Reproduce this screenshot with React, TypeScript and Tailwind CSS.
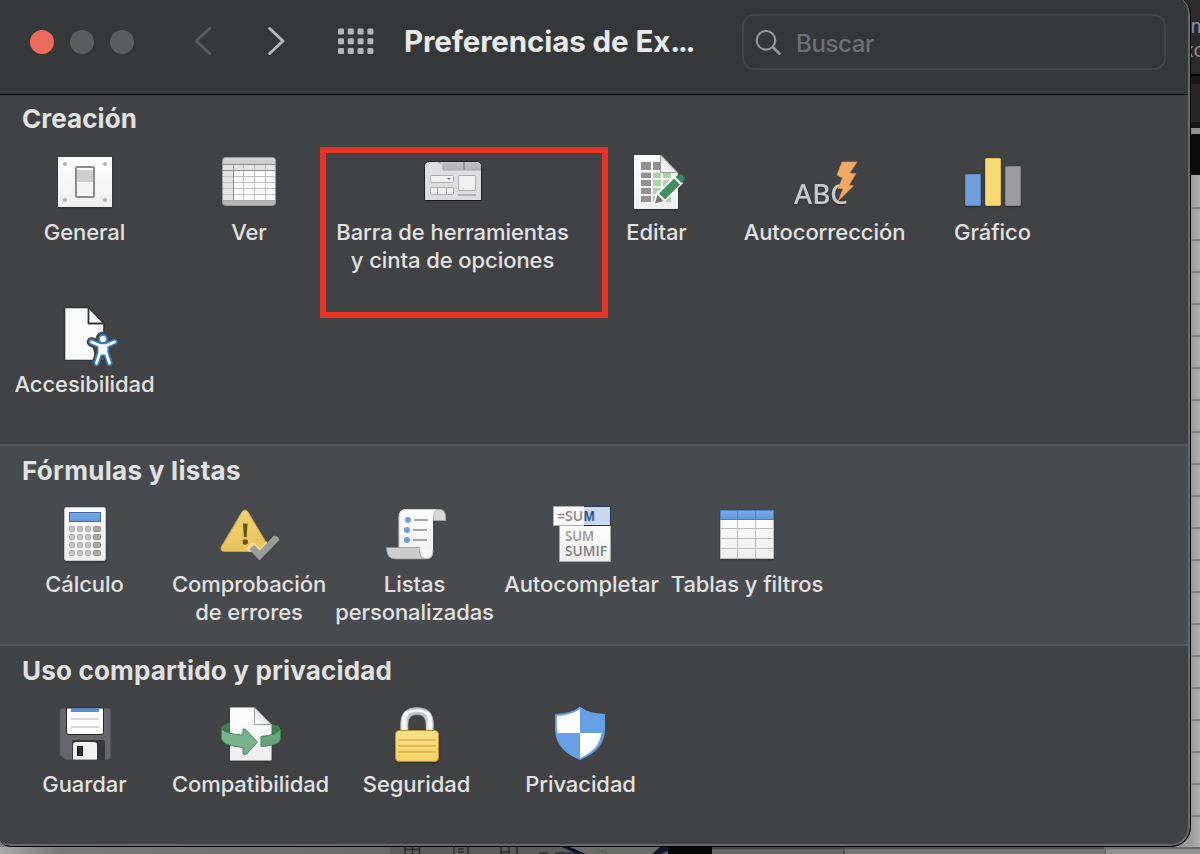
import type { ReactNode } from 'react';

type ItemProps = {
  label: ReactNode;
  width: string;
  viewBox: string;
  children: ReactNode;
};

function Item({ label, width, viewBox, children }: ItemProps) {
  return (
    <div className={`${width} flex shrink-0 flex-col items-center`}>
      <svg width={viewBox.split(' ')[2]} height="64" viewBox={viewBox} className="shrink-0">
        {children}
      </svg>
      <div className="mt-1 text-center text-[22px] leading-7 font-[450] tracking-[-0.07px] whitespace-nowrap text-[#e2e2e3]">{label}</div>
    </div>
  );
}

function Heading({ tracking, children }: { tracking: string; children: ReactNode }) {
  return <h2 className={`${tracking} pl-[22px] text-[26px] leading-8 font-bold text-[#e1e2e2]`}>{children}</h2>;
}

function Gradients() {
  return (
    <svg width="0" height="0" className="absolute">
      <defs>
        <linearGradient id="paper" x1="0" y1="0" x2="0" y2="1">
          <stop offset="0" stopColor="#fff" />
          <stop offset="1" stopColor="#eee" />
        </linearGradient>
        <linearGradient id="fold" x1="0" y1="1" x2="1" y2="0">
          <stop offset="0" stopColor="#fff" />
          <stop offset="1" stopColor="#cfcfcf" />
        </linearGradient>
        <linearGradient id="gray" x1="0" y1="0" x2="0" y2="1">
          <stop offset="0" stopColor="#d2d2d2" />
          <stop offset="1" stopColor="#b4b4b4" />
        </linearGradient>
        <linearGradient id="gold" x1="0" y1="0" x2="0" y2="1">
          <stop offset="0" stopColor="#fbe08a" />
          <stop offset="1" stopColor="#f5cf62" />
        </linearGradient>
        <linearGradient id="blue" x1="0" y1="0" x2="0" y2="1">
          <stop offset="0" stopColor="#79aae6" />
          <stop offset="1" stopColor="#6598d8" />
        </linearGradient>
        <linearGradient id="warn" x1="0" y1="0" x2="0" y2="1">
          <stop offset="0" stopColor="#edcf72" />
          <stop offset="1" stopColor="#e9c45c" />
        </linearGradient>
        <linearGradient id="metal" x1="0" y1="0" x2="1" y2="0">
          <stop offset="0" stopColor="#cfcfcf" />
          <stop offset="0.12" stopColor="#fff" />
          <stop offset="0.25" stopColor="#c4c4c8" />
          <stop offset="0.75" stopColor="#c4c4c8" />
          <stop offset="0.88" stopColor="#fff" />
          <stop offset="1" stopColor="#cfcfcf" />
        </linearGradient>
        <filter id="drop" x="-20%" y="-20%" width="140%" height="150%">
          <feDropShadow dx="0" dy="1" stdDeviation="1" floodColor="#000" floodOpacity="0.35" />
        </filter>
      </defs>
    </svg>
  );
}

function Backdrop() {
  const lines = Array.from({ length: 21 }, (_, i) => i);
  return (
    <div className="absolute inset-0 flex flex-col bg-[#7b7b7b]">
      <div className="flex h-[847px] justify-end">
        <div className="flex w-[40px] flex-col">
          <div className="flex h-[74px] flex-col items-end overflow-hidden bg-[#2b2b2b] pt-[14px] text-[20px] leading-6 text-[#8d8d8d]">
            <span className="-mr-[8px]">m</span>
            <span className="-mr-[5px]">xc</span>
          </div>
          <div className="h-[2px] bg-black" />
          <div className="h-[8px] bg-[#1b1b1b]" />
          <div className="h-[38px] bg-[#272727]" />
          <div className="h-[6px] bg-[#151515]" />
          <div className="h-[6px] bg-[#8e8e8e]" />
          <div className="h-[42px] bg-[#0d0d0d]" />
          <div className="flex grow flex-col overflow-hidden bg-linear-to-r from-[#9c9c9c] from-78% to-[#b0b0b0] pt-[2px]">
            {lines.map((i) => (
              <div key={i} className="h-8 shrink-0 border-b-2 border-[#818181]" />
            ))}
          </div>
        </div>
      </div>
      <div className="flex h-[7px]">
        <div className="w-[390px] bg-linear-to-r from-[#aaa] via-[#7a7a7a] via-15% to-[#696969]" />
        <svg width="322" height="7" viewBox="390 847 322 7" className="shrink-0">
          <rect x="390" y="847" width="278" height="7" fill="#5c5c5c" />
          <path d="M405 847v7M412.500 847v7M419.500 847v7M404 849.500h16M454 847v7M468 847v7M458 849h6M458 852h6M501 847v7M509 847v7M517 847v7M501 852h9" stroke="#2c2c2c" strokeWidth="1.500" fill="none" />
          <path d="M539 853h9M555 853h20" stroke="#3a3a3a" strokeWidth="2" />
          <path d="M568 847h98l-14 7h-67z" fill="#696b68" />
          <path d="M562 847h8l16 7h-9zM660 847h8v4l-8 3h-8z" fill="#10162f" />
          <path d="M598 854l4-4 4 4M606 854v-4" stroke="#55584e" fill="none" />
          <rect x="668" y="847" width="44" height="7" fill="#080808" />
        </svg>
        <div className="w-[131px] border-t-2 border-[#454545] bg-[#686868]" />
        <div className="w-[261px] border-t-2 border-l-2 border-[#4c4c4c] bg-[#747474]" />
        <div className="grow border-t-2 border-l-2 border-[#6a6a6a] bg-[#909090]" />
      </div>
    </div>
  );
}

function Toolbar() {
  return (
    <header className="flex h-[94px] shrink-0 items-start">
      <div className="mt-[30px] ml-[30px] flex gap-4">
        <span className="size-6 rounded-full bg-[#ed6a5e]" />
        <span className="size-6 rounded-full bg-[#595d5e]" />
        <span className="size-6 rounded-full bg-[#595d5e]" />
      </div>
      <svg width="96" height="34" viewBox="192 24 96 34" fill="none" strokeWidth="3" strokeLinecap="round" strokeLinejoin="round" className="mt-6 ml-[58px] shrink-0">
        <path d="M209.700 28.500L196.300 41L209.700 53.500" stroke="#595c5d" />
        <path d="M269.600 28.500L283 41L269.600 53.500" stroke="#b4b6b6" />
      </svg>
      <svg width="38" height="28" viewBox="337 28 38 28" fill="#b3b5b6" className="mt-7 ml-[49px] shrink-0">
        {[28.5, 38.3, 48.1].map((y) => [338, 347.8, 357.6, 367.4].map((x) => <rect key={`${x}-${y}`} x={x} y={y} width="6" height="6" rx="1.3" />))}
      </svg>
      <h1 className="mt-[21px] ml-[29px] w-[338px] shrink-0 text-[29.5px] leading-10 font-bold tracking-[-0.1px] whitespace-nowrap text-[#e9eaea]">
        Preferencias de Ex<span className="tracking-[-2.2px]">...</span>
      </h1>
      <div className="mt-[14px] flex h-14 w-[424px] shrink-0 items-center rounded-xl border-2 border-[#434647] pl-[10px]">
        <svg width="28" height="28" viewBox="754 28 28 28" fill="none" stroke="#97999a" strokeLinecap="round">
          <circle cx="766" cy="40.300" r="9.300" strokeWidth="2.100" />
          <path d="M773 47.300l6.300 6.300" strokeWidth="2.800" />
        </svg>
        <span className="mt-[3px] ml-[14px] text-[24px] font-[450] tracking-[-0.35px] text-[#6d7071]">Buscar</span>
      </div>
    </header>
  );
}

function GeneralIcon() {
  return (
    <g>
      <rect x="58" y="157" width="54" height="50" fill="url(#paper)" filter="url(#drop)" />
      {[65, 105].map((x) => [164, 200].map((y) => <circle key={`${x}-${y}`} cx={x} cy={y} r="2" fill="#b0b0b0" />))}
      <rect x="76" y="167" width="18" height="30" rx="1" fill="#fff" stroke="#8c8c8c" strokeWidth="2" />
      <rect x="77" y="170" width="16" height="12" fill="#cfcfcf" />
      <rect x="77" y="182" width="16" height="12" fill="#f4f4f4" />
    </g>
  );
}

function ViewIcon() {
  return (
    <g>
      <rect x="222.500" y="157.500" width="53" height="48" rx="3" fill="url(#gray)" stroke="#9c9c9c" />
      <rect x="223" y="164" width="52" height="36" fill="#fbfbfb" />
      <path d="M223 164h52v6h-42v30h-10z" fill="#e4e4e4" />
      <path d="M223 176.500h52M223 182.500h52M223 188.500h52M223 194.500h52M243.500 165v35M254.500 165v35M265.500 165v35" stroke="#c2c2c2" />
      <path d="M223 164.500h52M223 170.500h52M233.500 165v35" stroke="#8f8f8f" fill="none" />
      <path d="M223 200.500h52" stroke="#a8a8a8" />
    </g>
  );
}

function RibbonIcon() {
  return (
    <g>
      <path d="M424.500 200.500v-34q0-5 5-5h47q5 0 5 5v34z" fill="#dedee0" stroke="#1e1e1f" />
      <path d="M443 162.500h34q4 0 4 4v3.500h-38z" fill="#b9b9bb" />
      <path d="M464 162v8" stroke="#999" strokeWidth="2" />
      <path d="M438 162.500q5 0 5 5v2.500h38" stroke="#a5a5a7" fill="none" />
      <g stroke="#adadaf" fill="#f0f0f1">
        <rect x="430.500" y="175.500" width="23" height="7" rx="1" />
        <rect x="430.500" y="187.500" width="23" height="7" rx="1" />
        <rect x="458.500" y="175.500" width="17" height="15" rx="0.500" />
        <path d="M437.500 188v6.500M446.500 188v6.500" />
      </g>
      <path d="M447 178h4l-2 2z" fill="#777" />
      <rect x="458" y="194" width="18" height="2" fill="#b3b3b5" />
    </g>
  );
}

function EditIcon() {
  return (
    <g>
      <path d="M634 155h27l17 17.500v36.500h-44z" fill="url(#paper)" filter="url(#drop)" />
      <path d="M641 162h10v8h-10zM653 162h8v8h-8zM641 172.500h10v5.500h-10zM641 180h10v6h-10zM641 188h10v6h-10zM641 196h10v6h-10z" fill="#919191" />
      <path d="M653 172.500h8v5.500h-8zM663 172.500h8v5.500h-8zM653 180h8v6h-8zM663 180h8v6h-8zM653 188h8v6h-8zM663 188h8v6h-8zM653 196h8v6h-8zM663 196h8v6h-8z" fill="#a9d4a4" />
      <path d="M660.500 155v17.500h17z" fill="url(#fold)" stroke="#777" strokeWidth="0.700" />
      <path d="M654 204.500l3-11L675 176l7 7L664.500 201z" fill="#fff" stroke="#fff" strokeWidth="1.600" />
      <path d="M675.500 177l3-2.500q3-1 5 1.500 2 2.500.5 4.500l-2.500 2.500z" fill="#35875a" />
      <path d="M674 178.500l6 6-15 15-6-6z" fill="#458d61" />
      <path d="M657.500 194.500l6 6.500-8.500 2.500z" fill="#777" />
    </g>
  );
}

function AutocorrectIcon() {
  return (
    <g>
      <text x="794" y="204" fontFamily="Noto Sans, sans-serif" fontSize="27" fontWeight="500" textLength="54" lengthAdjust="spacingAndGlyphs" fill="#c8c8ca" filter="url(#drop)">ABC</text>
      <path d="M842 162h15l-7.500 11.500h6.500l-7 11.500 4.500 1-15 14.500 4.500-12h-5l4.500-10.500-5.500-3z" fill="#f4aa66" stroke="#dc914c" strokeWidth="0.700" />
    </g>
  );
}

function ChartIcon() {
  return (
    <g filter="url(#drop)">
      <rect x="965.500" y="174.500" width="15" height="31" rx="1" fill="#719edc" stroke="#5d88c4" />
      <rect x="985.500" y="158.500" width="15" height="47" rx="1" fill="#fadb73" stroke="#e1bb50" />
      <rect x="1005.500" y="166.500" width="15" height="39" rx="1" fill="#9c9c9e" stroke="#858587" />
    </g>
  );
}

function AccessibilityIcon() {
  const limbs = 'M91.500 342l8.500 3.500v7l-3.500 10.500M114.500 342l-8.500 3.500v7l3.500 10.500M100 345.500h6';
  return (
    <g fill="none" strokeLinecap="round" strokeLinejoin="round">
      <path d="M64.500 307.500h24l15.500 16v37h-39.500z" fill="#fafafa" stroke="#333435" strokeWidth="1.600" strokeLinecap="butt" strokeLinejoin="miter" />
      <path d="M88.500 307v16.500h16" stroke="#333435" strokeWidth="1.800" />
      <g stroke="#414244" fill="#414244">
        <circle cx="103" cy="339" r="7" />
        <path d="M91.500 342l8.500 3.500v7l-3.500 10.500" strokeWidth="9.500" />
      </g>
      <g stroke="#3980c3">
        <circle cx="103" cy="339" r="4.900" fill="#3980c3" stroke="none" />
        <path d={limbs} strokeWidth="6.200" />
        <path d="M100.500 345h5v7l-2.500 2-2.500-2z" fill="#3980c3" strokeWidth="3" />
      </g>
      <g stroke="#fff">
        <circle cx="103" cy="339" r="3.100" fill="#fff" stroke="none" />
        <path d={limbs} strokeWidth="2.700" />
        <path d="M99.500 345.500h7v7l-1 1.500h-5l-1-1.500z" fill="#fff" strokeWidth="1" />
      </g>
    </g>
  );
}

function CalculatorIcon() {
  return (
    <g>
      <rect x="64.500" y="507.500" width="41" height="53" rx="2" fill="url(#paper)" stroke="#c6c6c6" filter="url(#drop)" />
      <rect x="69.500" y="512.500" width="31" height="9" fill="url(#blue)" stroke="#3e6cad" />
      {[526, 534, 542, 550].map((y) =>
        [69, 77, 85, 93].map((x) => (
          <rect key={`${x}-${y}`} x={x + 0.5} y={y + 0.5} width={x === 93 ? 7 : 5} height="5" rx="1" fill={x === 93 ? '#aaa' : '#c6c6c6'} stroke={x === 93 ? '#8d8d8d' : '#a8a8a8'} />
        )),
      )}
    </g>
  );
}

function WarningIcon() {
  return (
    <g>
      <path d="M242 512q3-4 6 0l20.500 34.500q2 5-3.500 5h-40q-5.500 0-3.500-5z" fill="url(#warn)" stroke="#c8a447" strokeWidth="1" />
      <path d="M243 523.500h4.500l-.8 13.500h-2.900z" fill="#6f4f0c" />
      <circle cx="245.200" cy="542" r="2.700" fill="#6f4f0c" />
      <path d="M248.500 551.500l-2-3.500 4.500-4.500h4l5 5 6.500-7 2 4-5 6z" fill="#f7dfa0" />
      <path d="M249.500 549.500l4.500-4.500 5.700 5.700 14.300-14.700q4.500 0 5 4L259.500 560z" fill="#9b9c97" stroke="#a9aaa4" strokeWidth="0.600" />
    </g>
  );
}

function ListsIcon() {
  return (
    <g>
      <path d="M404 509.500h35q-6 3-6 12v30q0 7.500-6 7.500h-35l7-12v-30q0-7.500 5-7.500z" fill="url(#paper)" />
      <path d="M399 547v-30q0-7.500 7-7.500h31" fill="none" stroke="#cfcfcf" />
      <path d="M433.500 520.500v-5q0-6 6-6 6 0 6 7v4z" fill="#d8d8d8" stroke="#ababab" strokeWidth="0.800" />
      <path d="M386.500 547.500h33q-1 11.500 6 11.500h-30q-9 0-9-11.500z" fill="#cdcdcd" stroke="#8d8d8d" strokeWidth="0.700" />
      <path d="M419.500 547.500q0 11 6.500 11 7 0 7-8" fill="#f6f6f6" stroke="#a9a9a9" strokeWidth="0.800" />
      <g fill="#6a9ede">
        <circle cx="408" cy="520" r="3" />
        <circle cx="407" cy="530" r="3" />
        <circle cx="407" cy="540" r="3" />
      </g>
      <path d="M414 520h14M413 530h14M413 540h14" stroke="#a5a5a5" strokeWidth="2" />
    </g>
  );
}

function AutocompleteIcon() {
  const font = { fontFamily: 'Open Sans, sans-serif', fontSize: 13.5, fontWeight: 600 };
  return (
    <g>
      <rect x="559.500" y="525.500" width="51" height="36" fill="url(#paper)" stroke="#a8a8a8" />
      <rect x="553.500" y="506.500" width="57" height="19" fill="#fafafa" stroke="#b0b0b0" />
      <path d="M584 507h26.500v18.500h-26.500z" fill="#c9d8ec" />
      <path d="M584 506.500h26.500v19h-26.500" fill="none" stroke="#22334f" />
      <text x="557" y="521" textLength="26" lengthAdjust="spacingAndGlyphs" fill="#858585" {...font}>=SU</text>
      <text x="583.500" y="521" textLength="11.500" lengthAdjust="spacingAndGlyphs" fill="#31569b" {...font} fontWeight={700}>M</text>
      <text x="565" y="541" textLength="29" lengthAdjust="spacingAndGlyphs" fill="#959595" {...font}>SUM</text>
      <text x="565" y="556" textLength="42" lengthAdjust="spacingAndGlyphs" fill="#7c7c7c" {...font}>SUMIF</text>
    </g>
  );
}

function TableIcon() {
  return (
    <g filter="url(#drop)">
      <rect x="720.500" y="510.500" width="53" height="48" fill="url(#paper)" stroke="#bdbdbd" />
      <path d="M721 528.500h52M721 538.500h52M721 548.500h52M737.500 519v39M755.500 519v39" stroke="#bcbcbc" />
      <rect x="720.500" y="510.500" width="53" height="9" fill="url(#blue)" stroke="#4f7fc0" />
      <path d="M737.500 511v8M755.500 511v8" stroke="#5481bd" />
    </g>
  );
}

function SaveIcon() {
  return (
    <g>
      <path d="M62 708.500h46q2.500 0 2.500 2.500v46q0 2.500-2.500 2.500h-43l-5-5v-43.500q0-2.500 2-2.500z" fill="#66666b" stroke="#555559" />
      <path d="M66.500 708h37v24q0 2.500-2.500 2.500h-32q-2.500 0-2.500-2.500z" fill="#fff" stroke="#27272a" />
      <rect x="71" y="708" width="28" height="4" fill="#5b8acd" />
      <path d="M71 719h28M71 727h28" stroke="#d7d7da" strokeWidth="1.800" />
      <path d="M72 760v-18q0-2 2-2h29q2 0 2 2v18z" fill="#37373a" />
      <path d="M73 759v-14q0-3 3-3h18q3 0 3 3v14z" fill="#f0f0f0" />
      <rect x="77.500" y="746.500" width="5" height="9" fill="#303033" stroke="#161618" />
      <path d="M73 759.500h24" stroke="#a9a9ab" />
    </g>
  );
}

function CompatibilityIcon() {
  return (
    <g>
      <path d="M221.500 728q0-3 9-5.500v12z" fill="#3f7f58" />
      <path d="M270 723.500q10.500 2 10.500 6v8l-9-2z" fill="#3f7f58" />
      <path d="M230 707.500h25l16.500 17v36h-41.500z" fill="url(#paper)" filter="url(#drop)" />
      <path d="M254.500 707.500v17h17z" fill="url(#fold)" stroke="#777" strokeWidth="0.700" />
      <path d="M221.500 727q1 7 21.500 8v-6q2-.5 3 1l11.500 12-11 12q-2.500 2-3.500-.5v-6q-21.500-2-21.500-9.500z" fill="#79b38b" stroke="#398252" strokeWidth="0.900" />
      <path d="M280.500 729q-3 6-19.500 7.500v10q19.500-1 19.500-8z" fill="#68a57d" stroke="#398252" strokeWidth="0.900" />
    </g>
  );
}

function LockIcon() {
  return (
    <g>
      <path d="M400.500 731v-6.500q0-17 16.500-17 16.500 0 16.500 17v6.500h-7.500v-7q0-9.500-9-9.500t-9 9.500v7z" fill="url(#metal)" stroke="#aaa" strokeWidth="0.600" />
      <path d="M403.500 730v-6q0-13.500 13.500-13.500t13.500 13.500v6" stroke="#f8f8f8" strokeWidth="2.500" fill="none" />
      <rect x="395.500" y="730.500" width="43" height="31" rx="4" fill="url(#gold)" stroke="#bd922d" filter="url(#drop)" />
      <path d="M398 740h38M398 746h38M398 752h38" stroke="#dfad43" strokeWidth="1.600" />
      <path d="M399 741.500h36M399 747.500h36M399 753.500h36" stroke="#fdebab" strokeWidth="0.700" />
    </g>
  );
}

function ShieldIcon() {
  return (
    <g>
      <path d="M580 706.500q8 7 25 7.500v15q0 21-25 31q-25-10-25-31v-15q17-.5 25-7.500z" fill="#65a0e3" />
      <path d="M580 709q-8 6-23 7q-.5 9 .5 17h22.500z" fill="#fff" />
      <path d="M580 733h21.500q-2.500 17-21.500 25z" fill="#fff" />
    </g>
  );
}

export default function App() {
  return (
    <div className="relative h-[854px] w-[1200px] overflow-hidden font-[Inter,sans-serif]">
      <Gradients />
      <Backdrop />
      <main className="relative -mt-[5px] flex h-[852px] w-[1191px] flex-col overflow-hidden rounded-[20px] rounded-tl-none rounded-bl-[10px] border-r border-b border-black bg-black">
        <div className="flex grow flex-col overflow-hidden rounded-[19px] rounded-tl-none rounded-bl-[9px] border-r-2 border-b-2 border-[#67696a] bg-[#414244] pt-[5px] [background-image:linear-gradient(#353839_0_99px,#000_99px_100px,#414244_100px)]">
          <Toolbar />
          <section className="mt-px flex h-[349px] shrink-0 flex-col pt-[8px]">
            <Heading tracking="tracking-[0.05px]">Creación</Heading>
            <div className="mt-[15px] flex h-[152px] shrink-0">
              <Item label="General" width="w-[169px]" viewBox="48 150 73 64"><GeneralIcon /></Item>
              <Item label="Ver" width="w-[160px]" viewBox="213 150 72 64"><ViewIcon /></Item>
              <div className="relative flex w-[247px] shrink-0 justify-center">
                <Item label={<>Barra de herramientas<br />y cinta de opciones</>} width="w-[247px]" viewBox="416 150 73 64"><RibbonIcon /></Item>
                <div className="absolute -top-[3px] -left-[9px] h-[171px] w-[288px] border-[6px] border-[#ea3323]" />
              </div>
              <Item label="Editar" width="w-[161px]" viewBox="620 150 73 64"><EditIcon /></Item>
              <Item label="Autocorrección" width="w-[175px]" viewBox="788 150 73 64"><AutocorrectIcon /></Item>
              <Item label="Gráfico" width="w-[161px]" viewBox="956 150 73 64"><ChartIcon /></Item>
            </div>
            <div className="flex">
              <Item label="Accesibilidad" width="w-[169px]" viewBox="48 302 73 64"><AccessibilityIcon /></Item>
            </div>
          </section>
          <section className="flex h-[200px] shrink-0 flex-col border-t-2 border-[#55585a] bg-[#474b4d] pt-[9px]">
            <Heading tracking="tracking-[0.3px]">Fórmulas y listas</Heading>
            <div className="mt-[15px] flex">
              <Item label="Cálculo" width="w-[169px]" viewBox="48 502 73 64"><CalculatorIcon /></Item>
              <Item label={<>Comprobación<br />de errores</>} width="w-[160px]" viewBox="213 502 72 64"><WarningIcon /></Item>
              <Item label={<>Listas<br />personalizadas</>} width="w-[171px]" viewBox="378 502 73 64"><ListsIcon /></Item>
              <Item label="Autocompletar" width="w-[163px]" viewBox="545 502 73 64"><AutocompleteIcon /></Item>
              <Item label="Tablas y filtros" width="w-[168px]" viewBox="711 502 72 64"><TableIcon /></Item>
            </div>
          </section>
          <section className="flex grow flex-col border-t-2 border-[#55585a] pt-[9px]">
            <Heading tracking="tracking-[0.18px]">Uso compartido y privacidad</Heading>
            <div className="mt-[15px] flex">
              <Item label="Guardar" width="w-[169px]" viewBox="48 702 73 64"><SaveIcon /></Item>
              <Item label="Compatibilidad" width="w-[163px]" viewBox="214 702 73 64"><CompatibilityIcon /></Item>
              <Item label="Seguridad" width="w-[169px]" viewBox="380 702 73 64"><LockIcon /></Item>
              <Item label="Privacidad" width="w-[159px]" viewBox="544 702 73 64"><ShieldIcon /></Item>
            </div>
          </section>
        </div>
      </main>
    </div>
  );
}
